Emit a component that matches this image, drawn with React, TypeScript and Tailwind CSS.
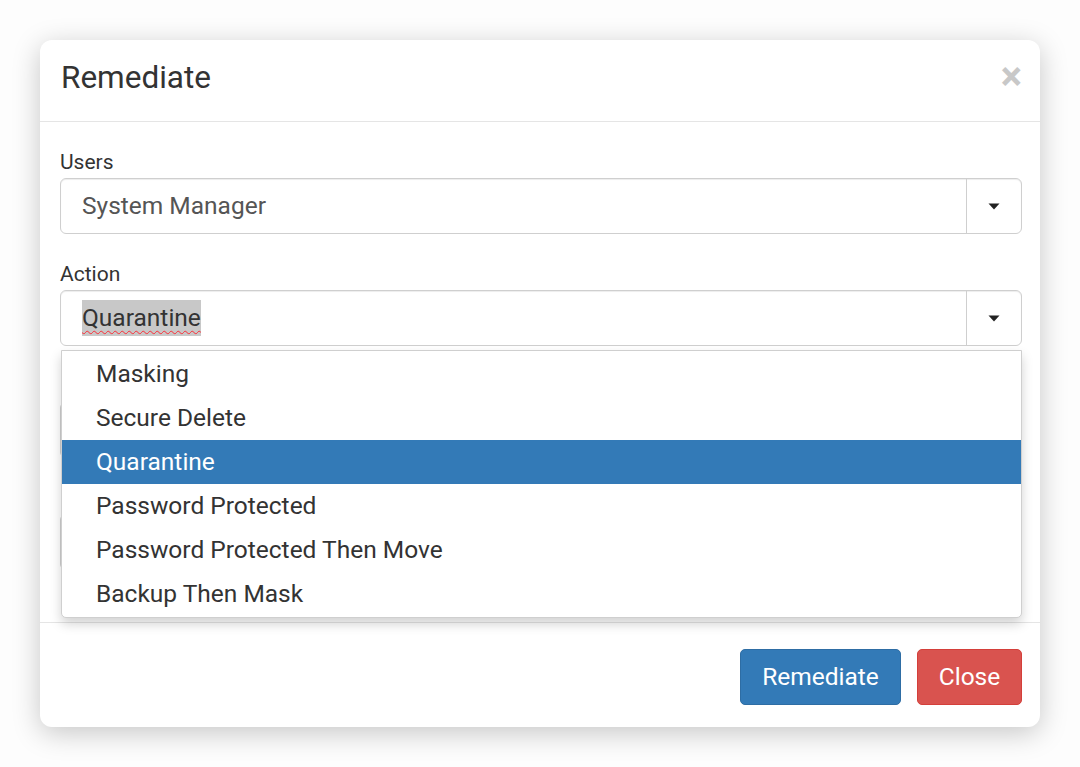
const actions = [
  "Masking",
  "Secure Delete",
  "Quarantine",
  "Password Protected",
  "Password Protected Then Move",
  "Backup Then Mask",
];

const Caret = () => (
  <svg width="12" height="7" viewBox="0 0 12 7">
    <path d="M0.5 0.5 L11.5 0.5 L6 6.5 Z" fill="#222" />
  </svg>
);

const SelectBox = ({ children }: { children?: React.ReactNode }) => (
  <div className="flex h-[56px] rounded-[6px] border border-[#cfcfcf] bg-white shadow-[inset_0_1px_1px_rgba(0,0,0,0.075)]">
    <div className="flex flex-1 items-center pl-[21px] text-[24.5px] text-[#555]">
      {children}
    </div>
    <div className="flex w-[55px] items-center justify-center border-l border-[#cfcfcf]">
      <Caret />
    </div>
  </div>
);

const Field = ({
  label,
  children,
  className = "",
}: {
  label?: string;
  children: React.ReactNode;
  className?: string;
}) => (
  <div className={"relative mb-[28px] " + className}>
    <div className="mb-[4px] h-[24px] text-[21px] leading-[24px] text-[#333]">
      {label}
    </div>
    {children}
  </div>
);

export default function App() {
  return (
    <div
      className="h-[767px] w-[1080px] bg-[#fdfdfd] px-[40px] pt-[40px]"
      style={{ fontFamily: "Roboto, 'Liberation Sans', sans-serif" }}
    >
      <div className="flex h-[687px] w-[1000px] flex-col rounded-[12px] bg-white shadow-[0_6px_28px_rgba(0,0,0,0.22)]">
        <div className="flex h-[82px] shrink-0 items-center justify-between border-b border-[#e5e5e5] pl-[21px] pr-[18px] pb-[6px]">
          <h4 className="text-[31.5px] text-[#333]">Remediate</h4>
          <span className="-mt-[2px] text-[40px] font-bold leading-none text-[#c8c8c8]">
            ×
          </span>
        </div>

        <div className="relative flex-1 pl-[20px] pr-[18px] pt-[28px]">
          <Field label="Users">
            <SelectBox>System Manager</SelectBox>
          </Field>

          <Field label="Action" className="z-10">
            <SelectBox>
              <span className="bg-[#c8c8c8] text-[#333] underline decoration-red-500 decoration-wavy decoration-1 underline-offset-[4px]">
                Quarantine
              </span>
            </SelectBox>
            <ul className="absolute left-[1px] right-0 top-[88px] rounded-b-[5px] border border-[#cfcfcf] bg-white py-[1px] shadow-[0_6px_12px_rgba(0,0,0,0.175)]">
              {actions.map((a) => (
                <li
                  key={a}
                  className={
                    a === "Quarantine"
                      ? "flex h-[44px] items-center bg-[#337ab7] pl-[34px] text-[24.5px] text-white"
                      : "flex h-[44px] items-center pl-[34px] text-[24.5px] text-[#333]"
                  }
                >
                  {a}
                </li>
              ))}
            </ul>
          </Field>

          {/* fields hidden behind the open menu */}
          <Field>
            <SelectBox />
          </Field>

          <Field>
            <SelectBox />
          </Field>
        </div>

        <div className="flex h-[105px] shrink-0 items-center justify-end gap-[16px] border-t border-[#e5e5e5] pr-[18px] pt-[4px]">
          <button className="h-[56px] w-[161px] rounded-[5px] border border-[#2e6da4] bg-[#337ab7] text-[24.5px] text-white">
            Remediate
          </button>
          <button className="h-[56px] w-[105px] rounded-[5px] border border-[#d43f3a] bg-[#d9534f] text-[24.5px] text-white">
            Close
          </button>
        </div>
      </div>
    </div>
  );
}
